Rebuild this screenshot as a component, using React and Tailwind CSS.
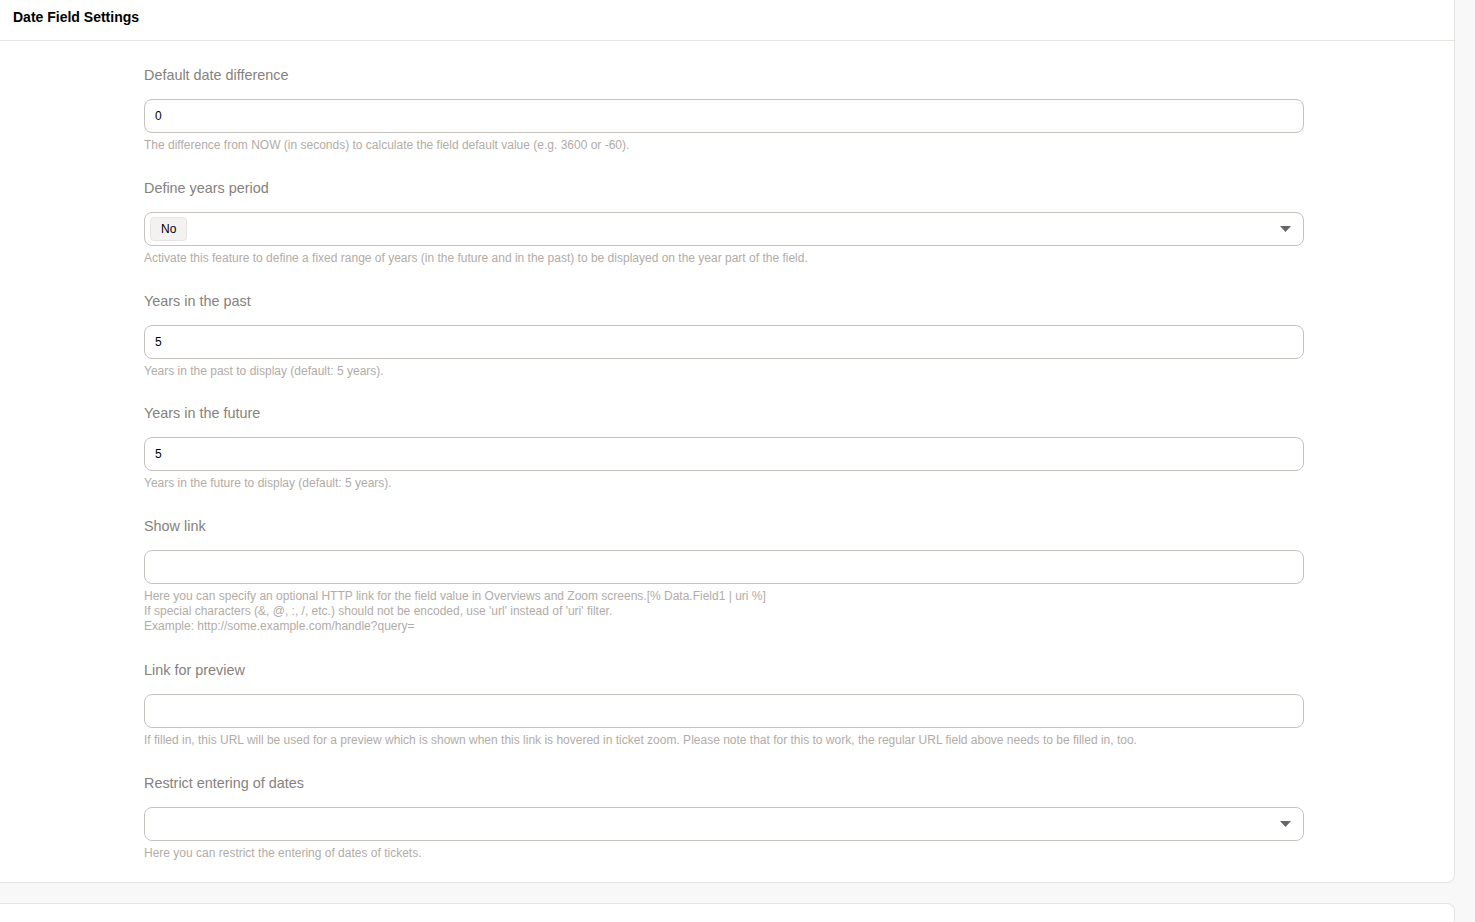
const fields = [
  {
    label: 'Default date difference',
    value: '0',
    help: ['The difference from NOW (in seconds) to calculate the field default value (e.g. 3600 or -60).'],
  },
  {
    label: 'Define years period',
    select: 'No',
    help: ['Activate this feature to define a fixed range of years (in the future and in the past) to be displayed on the year part of the field.'],
  },
  {
    label: 'Years in the past',
    value: '5',
    help: ['Years in the past to display (default: 5 years).'],
  },
  {
    label: 'Years in the future',
    value: '5',
    help: ['Years in the future to display (default: 5 years).'],
  },
  {
    label: 'Show link',
    value: '',
    help: [
      'Here you can specify an optional HTTP link for the field value in Overviews and Zoom screens.[% Data.Field1 | uri %]',
      "If special characters (&, @, :, /, etc.) should not be encoded, use 'url' instead of 'uri' filter.",
      'Example: http://some.example.com/handle?query=',
    ],
  },
  {
    label: 'Link for preview',
    value: '',
    help: ['If filled in, this URL will be used for a preview which is shown when this link is hovered in ticket zoom. Please note that for this to work, the regular URL field above needs to be filled in, too.'],
  },
  {
    label: 'Restrict entering of dates',
    select: '',
    help: ['Here you can restrict the entering of dates of tickets.'],
  },
]

function Field({ label, value, select, help, last }) {
  // multi-line help text leaves a bit more room below it
  const spacing = last ? '' : help.length > 1 ? 'mb-[26px]' : 'mb-[24.75px]'
  return (
    <div className={spacing}>
      <label className="block text-[14.4px] leading-[20px] text-[#85817d] mb-[14px]">{label}</label>
      {select !== undefined ? (
        <div className="w-[1160px] h-[34px] rounded-lg border border-[#c6c2be] bg-white flex items-center pl-[5px] pr-[12px]">
          {select && (
            <span className="h-[24px] px-[10px] flex items-center rounded-[4px] bg-[#f3f2f1] border border-[#e6e4e2] text-[12px] text-black">
              {select}
            </span>
          )}
          <svg className="ml-auto" width="11" height="6" viewBox="0 0 11 6">
            <path d="M0 0 L11 0 L5.5 6 Z" fill="#666" />
          </svg>
        </div>
      ) : (
        <input
          readOnly
          value={value}
          className="block w-[1160px] h-[34px] rounded-lg border border-[#c6c2be] bg-white px-[10px] text-[12px] text-black outline-none"
        />
      )}
      <div className="mt-[5px] text-[12px] leading-[15px] text-[#b2aca7]">
        {help.map((h, i) => (
          <div key={i}>{h}</div>
        ))}
      </div>
    </div>
  )
}

export default function App() {
  return (
    <div className="min-h-[922px] bg-[#f8f8f8] font-['Liberation_Sans',Arial,sans-serif]">
      <div className="w-[1455px] bg-white border-r border-b border-[#e6e4e1] rounded-br-lg">
        <div className="h-[41px] border-b border-[#e6e4e1] pl-[13px] pt-[9px]">
          <h2 className="text-[14px] leading-[16px] font-bold text-black">Date Field Settings</h2>
        </div>
        <div className="pl-[144px] pt-[24px] pb-[21px]">
          {fields.map((f, i) => (
            <Field key={f.label} {...f} last={i === fields.length - 1} />
          ))}
        </div>
      </div>
      <div className="mt-[20px] w-[1455px] h-[20px] bg-white border-t border-r border-[#e6e4e1] rounded-tr-lg" />
    </div>
  )
}
